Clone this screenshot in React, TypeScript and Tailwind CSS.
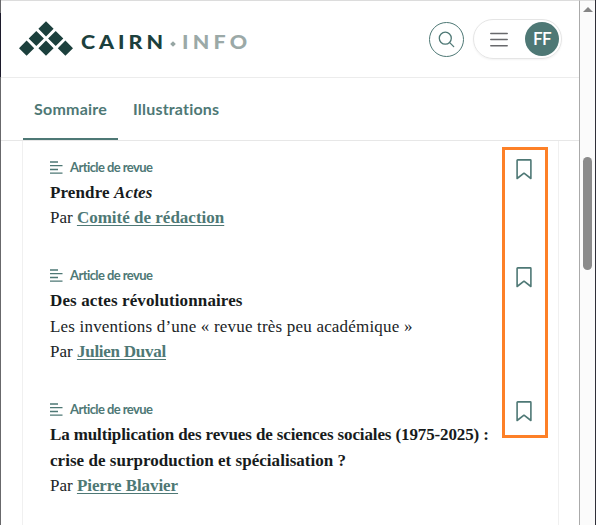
import type { ReactNode } from "react";

const SANS = "font-['Lato',sans-serif]";

function Logo() {
  return (
    <div className="flex h-[36px] items-center">
      <svg width="54" height="36" viewBox="0 0 54 36" fill="#1c403d">
        <path d="M27 .2l7.6 7.6-7.6 7.6-7.6-7.6zM17.3 9.9l7.6 7.6-7.6 7.6-7.6-7.6zM36.7 9.9l7.6 7.6-7.6 7.6-7.6-7.6zM7.6 19.6l7.6 7.6-7.6 7.6-7.6-7.6zM27 19.6l7.6 7.6-7.6 7.6-7.6-7.6zM46.4 19.6l7.6 7.6-7.6 7.6-7.6-7.6z" />
      </svg>
      <div className="ml-[8px] mt-[5px] flex items-center whitespace-nowrap font-['Lato',sans-serif] text-[19.5px] font-black leading-[20px]">
        <span className="w-[90px] origin-left scale-x-110 tracking-[3.6px] text-[#1c403d]">CAIRN</span>
        <span className="mt-[5px] size-[4px] rotate-45 bg-[#96a5a3]" />
        <span className="ml-[7px] origin-left scale-x-110 tracking-[3.8px] text-[#9ba9a7]">INFO</span>
      </div>
    </div>
  );
}

function TypeIcon() {
  return (
    <svg width="13" height="13" viewBox="0 0 13 13" stroke="#4e7875" strokeWidth="1.3">
      <path d="M0 1h8M0 4.7h12.5M0 8.5h8M0 12.2h12.5" />
    </svg>
  );
}

function Bookmark() {
  return (
    <svg width="16" height="21" viewBox="0 0 16 21" fill="none" stroke="#4e7875" strokeWidth="1.6" strokeLinejoin="round">
      <path d="M1.7.9h12.6q.6 0 .6.6v18L8 14.2l-6.9 5.3v-18q0-.6.6-.6z" />
    </svg>
  );
}

function Article({ title, subtitle, author, className }: { title: ReactNode; subtitle?: ReactNode; author: ReactNode; className: string }) {
  return (
    <article className={`flex items-start justify-between ${className}`}>
      <div className="whitespace-nowrap font-['Liberation_Serif',serif] text-[17px] leading-[25.6px] text-[#202426]">
        <div className={`flex h-[22px] items-center gap-[7px] text-[13px] font-bold leading-[22px] tracking-[-0.58px] text-[#4e7875] ${SANS}`}>
          <TypeIcon />
          <span className="-mt-px">Article de revue</span>
        </div>
        <div className="mt-[2px] font-bold text-[#171b1c]">{title}</div>
        {subtitle}
        <div>
          Par {author}
        </div>
      </div>
      <div className="mt-[3px]">
        <Bookmark />
      </div>
    </article>
  );
}

const link = "font-bold text-[#4e7875] underline decoration-1 underline-offset-2";

export default function App() {
  return (
    <div className="relative flex h-[525px] w-[596px] overflow-hidden bg-white">
      <div className="flex w-px shrink-0 flex-col bg-[#68686b]">
        <div className="mt-[13px] h-[64px] bg-[#1c1a2b]" />
      </div>
      <main className="flex w-[578px] flex-col border-t border-[#dcdcdc]">
        <header className="flex h-[77px] shrink-0 items-center justify-between border-b border-[#ececec] pl-[18px] pr-[17px]">
          <Logo />
          <div className="flex items-center gap-[9px]">
            <button className="flex size-[35px] items-center justify-center rounded-full border border-[#4e7875]">
              <svg width="17" height="17" viewBox="0 0 17 17" fill="none" stroke="#4e7875" strokeWidth="1.3" strokeLinecap="round">
                <circle cx="7.3" cy="7.2" r="6" />
                <path d="M11.7 11.6l4 4" />
              </svg>
            </button>
            <div className="flex h-[40px] w-[89px] items-center justify-between rounded-full border border-[#e5e5e5] pl-[16px] pr-[2px] shadow-xs">
              <svg width="18" height="15" viewBox="0 0 18 15" stroke="#68696c" strokeWidth="1.5" strokeLinecap="round">
                <path d="M.8 1.5h16.4M.8 7.5h16.4M.8 13.7h16.4" />
              </svg>
              <div className={`flex size-[34px] items-center justify-center rounded-full bg-[#4e7875] text-[17px] font-semibold tracking-[-0.5px] text-white ${SANS}`}>FF</div>
            </div>
          </div>
        </header>
        <nav className={`flex h-[63px] shrink-0 border-b border-[#e7e7e7] pl-[22px] text-[16px] font-bold leading-[20px] text-[#4e7875] ${SANS}`}>
          <div className="flex w-[95px] justify-center whitespace-nowrap border-b-2 border-[#4e7875] pt-[21px] tracking-[0.2px]">Sommaire</div>
          <div className="ml-[15px] whitespace-nowrap pt-[21px] tracking-[0.2px]">Illustrations</div>
        </nav>
        <section className="ml-[21px] w-[537px] grow border-x border-[#f0f0f0] pl-[27px] pr-[26px] pt-[15px]">
          <Article
            className="h-[108px]"
            title={<div className="-mb-px tracking-[0.12px]">Prendre <em>Actes</em></div>}
            author={<a className={link}>Comité de rédaction</a>}
          />
          <Article
            className="h-[134px]"
            title={<div className="tracking-[0.12px]">Des actes révolutionnaires</div>}
            subtitle={<div className="tracking-[0.19px]">Les inventions d’une « revue très peu académique »</div>}
            author={<a className={`${link} tracking-[-0.25px]`}>Julien Duval</a>}
          />
          <Article
            className="h-[120px]"
            title={
              <>
                <div className="tracking-[-0.12px]">La multiplication des revues de sciences sociales (1975-2025) :</div>
                <div className="tracking-[0.03px]">crise de surproduction et spécialisation ?</div>
              </>
            }
            author={<a className={`${link} tracking-[-0.07px]`}>Pierre Blavier</a>}
          />
        </section>
      </main>
      <aside className="flex w-[16px] flex-col items-center border-l border-t border-l-[#aaa] border-t-[#dcdcdc] bg-[#fbfbfb]">
        <div className="mt-[6px] border-x-[5px] border-b-[5px] border-x-transparent border-b-[#858585]" />
        <div className="mt-[145px] h-[113px] w-[9px] rounded-full bg-[#8b8b8b]" />
      </aside>
      <div className="w-px bg-[#303039]" />
      <div className="absolute left-[502px] top-[147px] h-[291px] w-[46px] border-3 border-[#fd8027]" />
    </div>
  );
}
